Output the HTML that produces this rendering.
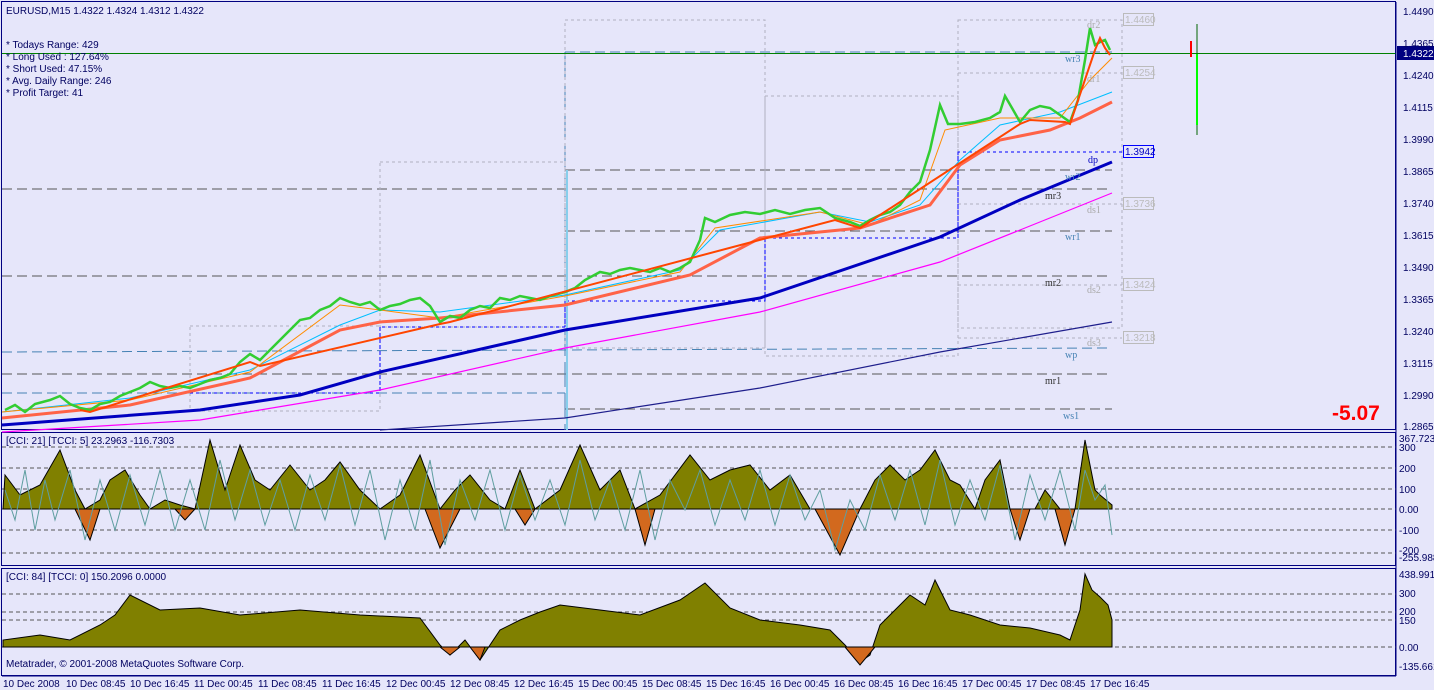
<!DOCTYPE html>
<html><head><meta charset="utf-8"><style>
html,body{margin:0;padding:0;background:#E6E6FA;}
svg{display:block;font-family:"Liberation Sans",sans-serif;font-size:10px;}
</style></head><body>
<svg width="1434" height="690" viewBox="0 0 1434 690" xmlns="http://www.w3.org/2000/svg">
<rect width="1434" height="690" fill="#E6E6FA"/>
<g fill="none" stroke="#000080" stroke-width="1">
<rect x="1.5" y="1.5" width="1394" height="428"/>
<rect x="1.5" y="432.5" width="1394" height="133"/>
<rect x="1.5" y="568.5" width="1394" height="107"/>
</g>
<g stroke-dasharray="10,5" fill="none">
<line x1="2" y1="189" x2="1112" y2="189" stroke="#555" />
<line x1="2" y1="276" x2="1112" y2="276" stroke="#555" />
<line x1="2" y1="374" x2="1112" y2="374" stroke="#555" />
<line x1="2" y1="352" x2="1112" y2="348" stroke="#4682B4" />
<line x1="2" y1="393" x2="565" y2="393" stroke="#4682B4" />
<line x1="565" y1="409" x2="1112" y2="409" stroke="#555" />
<line x1="565" y1="52" x2="1112" y2="52" stroke="#4682B4" />
<line x1="565" y1="170" x2="1112" y2="170" stroke="#555" />
<line x1="565" y1="231" x2="1112" y2="231" stroke="#555" />
<line x1="565" y1="52" x2="565" y2="430" stroke="#4682B4" stroke-dasharray="25,6"/>
</g>
<g stroke="#B0B0C0" stroke-dasharray="3,3" fill="none">
<path d="M190 326H380V411H190Z M380 162H565V327H380Z M565 20H765V348H565Z M765 96H958V356H765Z M958 20H1122V328H958Z"/>
<line x1="958" y1="20" x2="1122" y2="20"/><line x1="958" y1="73" x2="1122" y2="73"/>
<line x1="958" y1="204" x2="1122" y2="204"/><line x1="958" y1="285" x2="1122" y2="285"/><line x1="958" y1="338" x2="1122" y2="338"/>
</g>
<g stroke="#0000FF" stroke-dasharray="3,3" fill="none">
<path d="M190 393H380V327H565V301H765V238H958V152H1122"/>
<path d="M380 327V393 M565 301V327 M765 238V301 M958 152V238"/>
</g>
<line x1="567" y1="170" x2="567" y2="430" stroke="#87CEEB" stroke-width="2"/>
<line x1="2" y1="53.5" x2="1396" y2="53.5" stroke="#008000"/>
<polyline fill="none" stroke="#1E1E8C" stroke-width="1.2" points="380,430 565,418 760,388 940,352 1112,322"/>
<polyline fill="none" stroke="#FF00FF" stroke-width="1.2" points="2,432 200,420 380,390 565,348 760,312 940,262 1020,230 1112,193"/>
<polyline fill="none" stroke="#0000C0" stroke-width="3" points="2,425 200,410 300,395 380,372 565,330 760,298 940,237 1020,200 1112,162"/>
<polyline fill="none" stroke="#00BFFF" stroke-width="1" points="2,412 130,398 250,370 340,325 380,310 440,312 565,295 680,270 720,230 820,212 870,222 920,205 960,160 1000,125 1060,112 1112,92"/>
<polyline fill="none" stroke="#FF8C00" stroke-width="1" points="2,412 130,400 250,372 340,305 380,310 440,318 565,296 680,272 715,228 820,212 870,225 920,200 945,130 1000,118 1060,118 1090,80 1112,58"/>
<polyline fill="none" stroke="#FF6347" stroke-width="3" points="2,418 130,405 250,378 340,330 380,322 440,318 565,305 690,275 760,238 860,228 930,205 960,165 1000,140 1050,130 1080,118 1112,102"/>
<polyline fill="none" stroke="#32CD32" stroke-width="2.5" points="5,410 15,405 25,412 35,404 50,400 60,396 70,404 80,408 90,410 100,404 110,402 120,396 130,392 140,388 150,382 160,386 170,388 180,386 190,388 200,384 210,380 220,378 230,374 240,362 250,354 260,360 270,350 280,340 290,330 300,320 310,318 320,310 330,306 340,298 350,302 360,305 370,302 380,310 390,306 400,304 410,300 420,298 430,306 440,322 450,316 460,318 470,310 480,306 490,308 500,298 510,300 520,296 530,298 540,300 550,296 565,292 575,288 585,280 600,272 610,274 620,270 630,268 640,270 650,272 660,268 670,272 680,268 690,262 700,240 705,218 715,222 730,215 745,212 760,214 775,210 790,214 805,210 820,208 835,218 850,222 860,226 870,220 880,215 890,212 900,205 910,192 920,182 930,150 940,105 948,124 960,124 975,122 990,118 1000,112 1005,96 1012,108 1020,122 1030,110 1040,106 1050,108 1060,115 1070,122 1078,100 1085,60 1090,28 1095,45 1100,42 1105,40 1110,50"/>
<polyline fill="none" stroke="#FF4500" stroke-width="2" points="80,410 90,412 160,390 250,362 260,366 440,324 450,322 835,220 860,228 1020,124 1030,120 1065,122 1070,124 1095,50 1100,38 1105,48 1110,55"/>
<line x1="1191" y1="41" x2="1191" y2="57" stroke="#FF0000" stroke-width="2"/>
<line x1="1197" y1="24" x2="1197" y2="135" stroke="#006400"/>
<line x1="1197" y1="54" x2="1197" y2="125" stroke="#00FF00" stroke-width="2"/>
<g font-family="Liberation Serif,serif" font-size="10">
<text x="1087" y="28" fill="#aaa">dr2</text><text x="1065" y="62" fill="#4682B4">wr3</text>
<text x="1087" y="82" fill="#aaa">dr1</text><text x="1088" y="163" fill="#0000C0">dp</text>
<text x="1065" y="180" fill="#4682B4">wr2</text><text x="1045" y="199" fill="#333">mr3</text>
<text x="1087" y="213" fill="#aaa">ds1</text><text x="1065" y="240" fill="#4682B4">wr1</text>
<text x="1045" y="286" fill="#333">mr2</text><text x="1087" y="293" fill="#aaa">ds2</text>
<text x="1087" y="346" fill="#aaa">ds3</text><text x="1065" y="358" fill="#4682B4">wp</text>
<text x="1045" y="384" fill="#333">mr1</text><text x="1063" y="419" fill="#4682B4">ws1</text>
</g>
<g font-size="10">
<rect x="1123.5" y="13.5" width="30" height="12" fill="#E6E6FA" stroke="#bbb"/><text x="1125" y="23" fill="#bbb">1.4460</text>
<rect x="1123.5" y="66.5" width="30" height="12" fill="#E6E6FA" stroke="#bbb"/><text x="1125" y="76" fill="#bbb">1.4254</text>
<rect x="1123.5" y="145.5" width="30" height="12" fill="#E6E6FA" stroke="#0000FF"/><text x="1125" y="155" fill="#0000C0">1.3942</text>
<rect x="1123.5" y="197.5" width="30" height="12" fill="#E6E6FA" stroke="#bbb"/><text x="1125" y="207" fill="#bbb">1.3736</text>
<rect x="1123.5" y="278.5" width="30" height="12" fill="#E6E6FA" stroke="#bbb"/><text x="1125" y="288" fill="#bbb">1.3424</text>
<rect x="1123.5" y="331.5" width="30" height="12" fill="#E6E6FA" stroke="#bbb"/><text x="1125" y="341" fill="#bbb">1.3218</text>
</g>
<text x="1332" y="420" fill="#FF0000" font-size="21" font-weight="bold">-5.07</text>
<g fill="#000060" font-size="10">
<text x="6" y="14">EURUSD,M15  1.4322 1.4324 1.4312 1.4322</text>
<text x="6" y="48">* Todays Range: 429</text>
<text x="6" y="60">* Long Used : 127.64%</text>
<text x="6" y="72">* Short Used: 47.15%</text>
<text x="6" y="84">* Avg. Daily Range: 246</text>
<text x="6" y="96">* Profit Target: 41</text>
<text x="6" y="444">[CCI: 21] [TCCI: 5]  23.2963 -116.7303</text>
<text x="6" y="580">[CCI: 84] [TCCI: 0]  150.2096 0.0000</text>
<text x="6" y="667">Metatrader, © 2001-2008 MetaQuotes Software Corp.</text>
</g>
<g stroke="#555" stroke-dasharray="4,3">
<line x1="2" y1="447" x2="1396" y2="447"/><line x1="2" y1="468" x2="1396" y2="468"/>
<line x1="2" y1="489" x2="1396" y2="489"/><line x1="2" y1="509" x2="1396" y2="509"/>
<line x1="2" y1="530" x2="1396" y2="530"/><line x1="2" y1="553" x2="1396" y2="553"/>
<line x1="2" y1="594" x2="1396" y2="594"/><line x1="2" y1="612" x2="1396" y2="612"/>
<line x1="2" y1="620" x2="1396" y2="620"/><line x1="2" y1="647" x2="1396" y2="647"/>
</g>
<path fill="#808000" stroke="#000" stroke-width="1" d="M3 509 L5 475 L20 495 L40 485 L60 450 L75 490 L85 509 L100 500 L110 480 L125 470 L140 495 L150 509 L165 500 L180 505 L195 509 L210 440 L225 490 L240 445 L255 480 L270 490 L290 465 L310 490 L325 480 L340 462 L360 490 L380 509 L400 495 L420 455 L440 509 L455 490 L470 475 L490 500 L505 509 L520 470 L535 509 L560 490 L580 445 L600 490 L620 470 L635 509 L660 495 L690 455 L710 480 L730 470 L750 465 L770 490 L790 475 L810 509 L860 509 L875 480 L890 465 L905 480 L920 470 L935 450 L950 480 L960 485 L975 509 L985 480 L1000 460 L1010 509 L1035 509 L1045 490 L1060 509 L1075 509 L1085 440 L1095 490 L1100 495 L1112 505 L1112 509 Z"/>
<path fill="#D2691E" stroke="#000" d="M75 509 L90 540 L100 509 Z M175 509 L185 520 L195 509 Z M425 509 L440 548 L460 509 Z M515 509 L525 525 L535 509 Z M635 509 L645 545 L655 509 Z M815 509 L840 555 L860 509 Z M1010 509 L1020 540 L1030 509 Z M1055 509 L1065 545 L1075 509 Z"/>
<polyline fill="none" stroke="#5F9EA0" stroke-width="1" points="5,490 15,520 25,470 35,530 45,480 55,520 70,470 85,540 100,480 115,530 130,475 145,525 160,470 175,530 190,480 205,530 220,460 235,520 250,470 265,525 280,480 295,530 310,475 325,520 340,465 355,525 370,470 385,540 400,480 415,530 430,460 445,545 460,480 475,520 490,470 505,530 520,475 535,520 550,480 565,525 580,460 595,520 610,480 625,530 640,470 655,540 670,480 685,510 700,470 715,525 730,480 745,520 760,470 775,525 790,475 805,520 820,490 835,550 850,500 865,530 880,475 895,520 910,470 925,525 940,460 955,525 970,480 985,520 1000,465 1015,540 1030,475 1045,520 1060,470 1075,530 1085,470 1095,500 1105,485 1112,535"/>
<path fill="#808000" stroke="#000" d="M3 647 L3 640 L40 635 L70 640 L100 625 L115 615 L130 595 L160 610 L200 608 L240 615 L300 610 L360 615 L420 618 L440 645 L450 655 L465 640 L480 660 L500 630 L520 620 L540 612 L560 605 L600 610 L640 615 L680 600 L705 583 L730 608 L760 620 L800 625 L830 630 L845 645 L860 662 L870 655 L880 625 L895 610 L910 595 L925 605 L935 580 L950 610 L970 615 L1000 625 L1030 628 L1060 635 L1070 640 L1080 610 L1085 574 L1092 590 L1100 597 L1108 605 L1112 620 L1112 647 Z"/>
<path fill="#D2691E" stroke="#000" d="M440 647 L450 655 L460 647 Z M845 647 L860 665 L875 647 Z M470 647 L480 660 L485 647 Z"/>
<g stroke="#000080"><line x1="1396" y1="2" x2="1396" y2="676"/><line x1="2" y1="676" x2="1396" y2="676"/></g>
<rect x="1397" y="46" width="37" height="14" fill="#000080"/>
<g font-size="10" fill="#000060">
<text x="1403" y="15">1.4490</text><text x="1403" y="47">1.4365</text>
<text x="1403" y="57" fill="#fff">1.4322</text>
<text x="1403" y="79">1.4240</text><text x="1403" y="111">1.4115</text><text x="1403" y="143">1.3990</text>
<text x="1403" y="175">1.3865</text><text x="1403" y="207">1.3740</text><text x="1403" y="239">1.3615</text>
<text x="1403" y="271">1.3490</text><text x="1403" y="303">1.3365</text><text x="1403" y="335">1.3240</text>
<text x="1403" y="367">1.3115</text><text x="1403" y="399">1.2990</text><text x="1403" y="430">1.2865</text>
<text x="1399" y="442">367.723</text><text x="1399" y="451">300</text><text x="1399" y="472">200</text>
<text x="1399" y="493">100</text><text x="1399" y="513">0.00</text><text x="1399" y="534">-100</text>
<text x="1399" y="554">-200</text><text x="1399" y="561">-255.988</text>
<text x="1399" y="578">438.991</text><text x="1399" y="597">300</text><text x="1399" y="615">200</text>
<text x="1399" y="624">150</text><text x="1399" y="651">0.00</text><text x="1399" y="670">-135.661</text>
</g>
<g font-size="10" fill="#000060">
<text x="3" y="687">10 Dec 2008</text><text x="66" y="687">10 Dec 08:45</text><text x="130" y="687">10 Dec 16:45</text>
<text x="194" y="687">11 Dec 00:45</text><text x="258" y="687">11 Dec 08:45</text><text x="322" y="687">11 Dec 16:45</text>
<text x="386" y="687">12 Dec 00:45</text><text x="450" y="687">12 Dec 08:45</text><text x="514" y="687">12 Dec 16:45</text>
<text x="578" y="687">15 Dec 00:45</text><text x="642" y="687">15 Dec 08:45</text><text x="706" y="687">15 Dec 16:45</text>
<text x="770" y="687">16 Dec 00:45</text><text x="834" y="687">16 Dec 08:45</text><text x="898" y="687">16 Dec 16:45</text>
<text x="962" y="687">17 Dec 00:45</text><text x="1026" y="687">17 Dec 08:45</text><text x="1090" y="687">17 Dec 16:45</text>
</g>
</svg>
</body></html>
